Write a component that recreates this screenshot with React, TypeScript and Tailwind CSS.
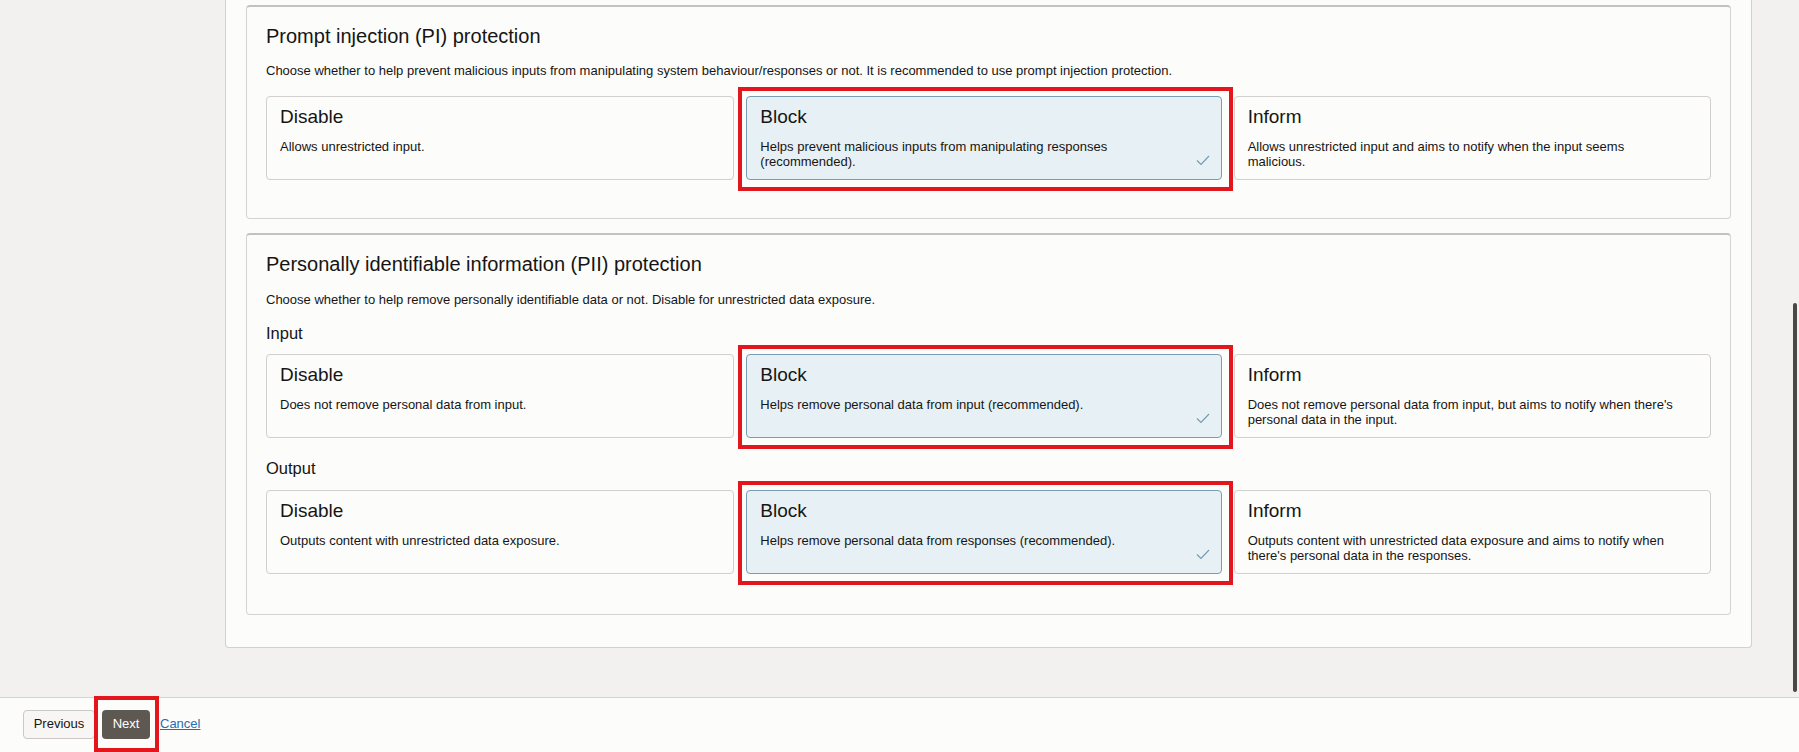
import React from "react";

type Opt = { title: string; desc: string; selected?: boolean };

function Check() {
  return (
    <svg
      className="absolute right-[11px] bottom-[13px] w-[14px] h-[11px]"
      viewBox="0 0 14 11"
      fill="none"
    >
      <path d="M1 5.5 L5 9.5 L13 1" stroke="#6f9bb5" strokeWidth="1.1" />
    </svg>
  );
}

function Card({ o }: { o: Opt }) {
  return (
    <div className="relative">
      {o.selected && (
        <div className="absolute -left-[8px] -top-[9px] -right-[11px] -bottom-[11px] border-[4px] border-[#e3161d] pointer-events-none" />
      )}
      <div
        className={
          "relative h-full rounded-[4px] border px-[13px] pt-[9px] pb-[10px] " +
          (o.selected
            ? "bg-[#e7f0f4] border-[#7a9db2]"
            : "bg-[#fcfcfb] border-[#d2cfcc]")
        }
      >
        <div className="text-[19px] leading-[22px] text-[#161513]">{o.title}</div>
        <div className="mt-[11px] text-[13px] leading-[15px] text-[#161513] pr-[15px]">
          {o.desc}
        </div>
        {o.selected && <Check />}
      </div>
    </div>
  );
}

function Row({ opts }: { opts: Opt[] }) {
  return (
    <div className="grid grid-cols-[469fr_476fr_478fr] gap-[12px]">
      {opts.map((o) => (
        <Card key={o.title} o={o} />
      ))}
    </div>
  );
}

export default function App() {
  return (
    <div
      className="relative w-[1799px] h-[752px] overflow-hidden bg-[#f2f1ef] flex flex-col"
      style={{ fontFamily: '"Liberation Sans", Arial, sans-serif' }}
    >
      <div className="flex-1 pl-[225px]">
        <div className="w-[1527px] bg-[#fcfcfb] border border-t-0 border-[#d3d0cd] rounded-b-[4px] px-[20px] pt-[5px] pb-[32px]">
          {/* Section 1 */}
          <div className="bg-[#fcfcfb] border border-[#d6d3d0] border-t-2 border-t-[#c4c1be] rounded-[4px] px-[19px] pt-[17px] pb-[38px]">
            <div className="text-[20px] leading-[24px] text-[#161513]">
              Prompt injection (PI) protection
            </div>
            <div className="mt-[15px] text-[13px] leading-[16px] text-[#161513]">
              Choose whether to help prevent malicious inputs from manipulating system behaviour/responses or not. It is recommended to use prompt injection protection.
            </div>
            <div className="mt-[17px]">
              <Row
                opts={[
                  { title: "Disable", desc: "Allows unrestricted input." },
                  {
                    title: "Block",
                    desc: "Helps prevent malicious inputs from manipulating responses (recommended).",
                    selected: true,
                  },
                  {
                    title: "Inform",
                    desc: "Allows unrestricted input and aims to notify when the input seems malicious.",
                  },
                ]}
              />
            </div>
          </div>

          {/* Section 2 */}
          <div className="mt-[14px] bg-[#fcfcfb] border border-[#d6d3d0] border-t-2 border-t-[#c4c1be] rounded-[4px] px-[19px] pt-[17px] pb-[40px]">
            <div className="text-[20px] leading-[24px] text-[#161513]">
              Personally identifiable information (PII) protection
            </div>
            <div className="mt-[16px] text-[13px] leading-[16px] text-[#161513]">
              Choose whether to help remove personally identifiable data or not. Disable for unrestricted data exposure.
            </div>
            <div className="mt-[15px] text-[16.5px] leading-[20px] text-[#161513]">Input</div>
            <div className="mt-[11px]">
              <Row
                opts={[
                  { title: "Disable", desc: "Does not remove personal data from input." },
                  {
                    title: "Block",
                    desc: "Helps remove personal data from input (recommended).",
                    selected: true,
                  },
                  {
                    title: "Inform",
                    desc: "Does not remove personal data from input, but aims to notify when there's personal data in the input.",
                  },
                ]}
              />
            </div>
            <div className="mt-[20px] text-[16.5px] leading-[20px] text-[#161513]">Output</div>
            <div className="mt-[12px]">
              <Row
                opts={[
                  { title: "Disable", desc: "Outputs content with unrestricted data exposure." },
                  {
                    title: "Block",
                    desc: "Helps remove personal data from responses (recommended).",
                    selected: true,
                  },
                  {
                    title: "Inform",
                    desc: "Outputs content with unrestricted data exposure and aims to notify when there's personal data in the responses.",
                  },
                ]}
              />
            </div>
          </div>
        </div>
      </div>

      {/* Footer */}
      <div className="h-[55px] shrink-0 border-t border-[#d6d3d0] bg-[#fcfcfb] flex items-center pl-[23px] pb-[2px]">
        <button className="h-[29px] w-[72px] rounded-[4px] border border-[#cbc8c5] bg-[#f7f6f5] text-[13px] text-[#161513]">
          Previous
        </button>
        <div className="relative ml-[7px]">
          <div className="absolute -left-[8px] -top-[14px] -right-[9px] -bottom-[13px] border-[4px] border-[#e3161d] pointer-events-none" />
          <button className="relative h-[29px] w-[48px] rounded-[4px] bg-[#5e5853] text-[13px] text-white">
            Next
          </button>
        </div>
        <a className="ml-[10px] text-[13px] text-[#2b6cb0] underline cursor-pointer">Cancel</a>
      </div>

      {/* overlay scrollbar */}
      <div className="absolute right-[2px] top-[303px] w-[4px] h-[389px] rounded-full bg-[#4a4744]" />
    </div>
  );
}
